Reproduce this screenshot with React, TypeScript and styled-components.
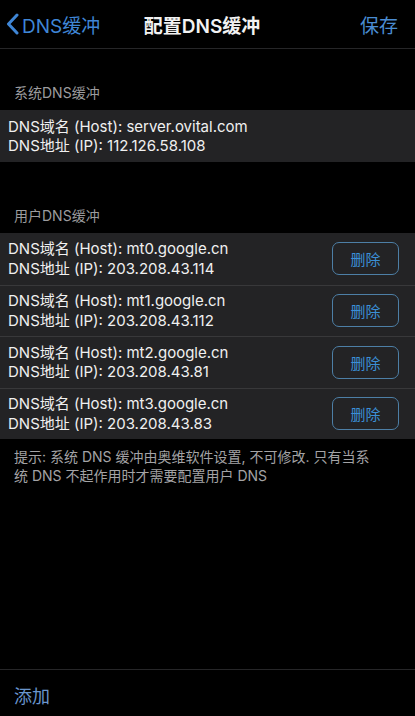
import React from "react";
import styled, { createGlobalStyle } from "styled-components";

const Global = createGlobalStyle`
  html, body { margin: 0; padding: 0; background: #000; }
  body { font-family: Inter, "Noto Sans CJK SC", sans-serif; color: #fff; }
  * { box-sizing: border-box; }
`;

const Page = styled.div`
  min-height: 716px;
  display: flex;
  flex-direction: column;
  background: #000;
`;

const NavBar = styled.div`
  height: 49px;
  display: grid;
  grid-template-columns: 1fr auto 1fr;
  align-items: center;
  border-bottom: 1px solid #262628;
  padding: 0 17px 0 6px;
`;

const BackLink = styled.div`
  display: flex;
  align-items: center;
  gap: 3px;
  color: #3f86d6;
  font-size: 19px;
  justify-self: start;
`;

const Title = styled.div`
  font-size: 19px;
  font-weight: 600;
  color: #f2f2f2;
`;

const SaveLink = styled.div`
  justify-self: end;
  color: #4a8cd2;
  font-size: 19px;
`;

const SectionHeader = styled.div<{ $top: number }>`
  padding: ${(p) => p.$top}px 14px 7px;
  font-size: 14px;
  line-height: 20px;
  color: #9c9c9e;
`;

const Group = styled.div`
  background: #232325;
`;

const Row = styled.div<{ $h: number }>`
  height: ${(p) => p.$h}px;
  display: flex;
  align-items: center;
  justify-content: space-between;
  padding: 0 16px 0 8px;
  & + & {
    border-top: 1px solid #38383a;
  }
`;

const Lines = styled.div`
  display: flex;
  flex-direction: column;
  font-size: 15px;
  line-height: 19.5px;
  color: #f0f0f0;
`;

const DeleteButton = styled.div`
  width: 67px;
  height: 33px;
  border: 1.5px solid #4d7fa6;
  border-radius: 7px;
  display: flex;
  align-items: center;
  justify-content: center;
  color: #3b8fd6;
  font-size: 15px;
`;

const Hint = styled.div`
  padding: 9px 45px 0 14px;
  font-size: 14px;
  line-height: 18.5px;
  color: #a3a3a5;
`;

const Spacer = styled.div`
  flex: 1;
`;

const Toolbar = styled.div`
  height: 47px;
  border-top: 1px solid #262628;
  display: flex;
  align-items: center;
  padding: 4px 14px 0;
  color: #6a95cc;
  font-size: 18px;
`;

const users = [
  { host: "mt0.google.cn", ip: "203.208.43.114" },
  { host: "mt1.google.cn", ip: "203.208.43.112" },
  { host: "mt2.google.cn", ip: "203.208.43.81" },
  { host: "mt3.google.cn", ip: "203.208.43.83" },
];

export default function App() {
  return (
    <Page>
      <Global />
      <NavBar>
        <BackLink>
          <svg width="13" height="22" viewBox="0 0 13 22" fill="none">
            <path d="M11 2 L2.5 11 L11 20" stroke="#3f86d6" strokeWidth="3" strokeLinecap="round" strokeLinejoin="round" />
          </svg>
          DNS缓冲
        </BackLink>
        <Title>配置DNS缓冲</Title>
        <SaveLink>保存</SaveLink>
      </NavBar>

      <SectionHeader $top={34}>系统DNS缓冲</SectionHeader>
      <Group>
        <Row $h={52}>
          <Lines>
            <span>DNS域名 (Host): server.ovital.com</span>
            <span>DNS地址 (IP): 112.126.58.108</span>
          </Lines>
        </Row>
      </Group>

      <SectionHeader $top={44}>用户DNS缓冲</SectionHeader>
      <Group>
        {users.map((u) => (
          <Row $h={51.5} key={u.host}>
            <Lines>
              <span>DNS域名 (Host): {u.host}</span>
              <span>DNS地址 (IP): {u.ip}</span>
            </Lines>
            <DeleteButton>删除</DeleteButton>
          </Row>
        ))}
      </Group>

      <Hint>
        提示: 系统 DNS 缓冲由奥维软件设置, 不可修改. 只有当系统 DNS 不起作用时才需要配置用户 DNS
      </Hint>

      <Spacer />
      <Toolbar>添加</Toolbar>
    </Page>
  );
}
